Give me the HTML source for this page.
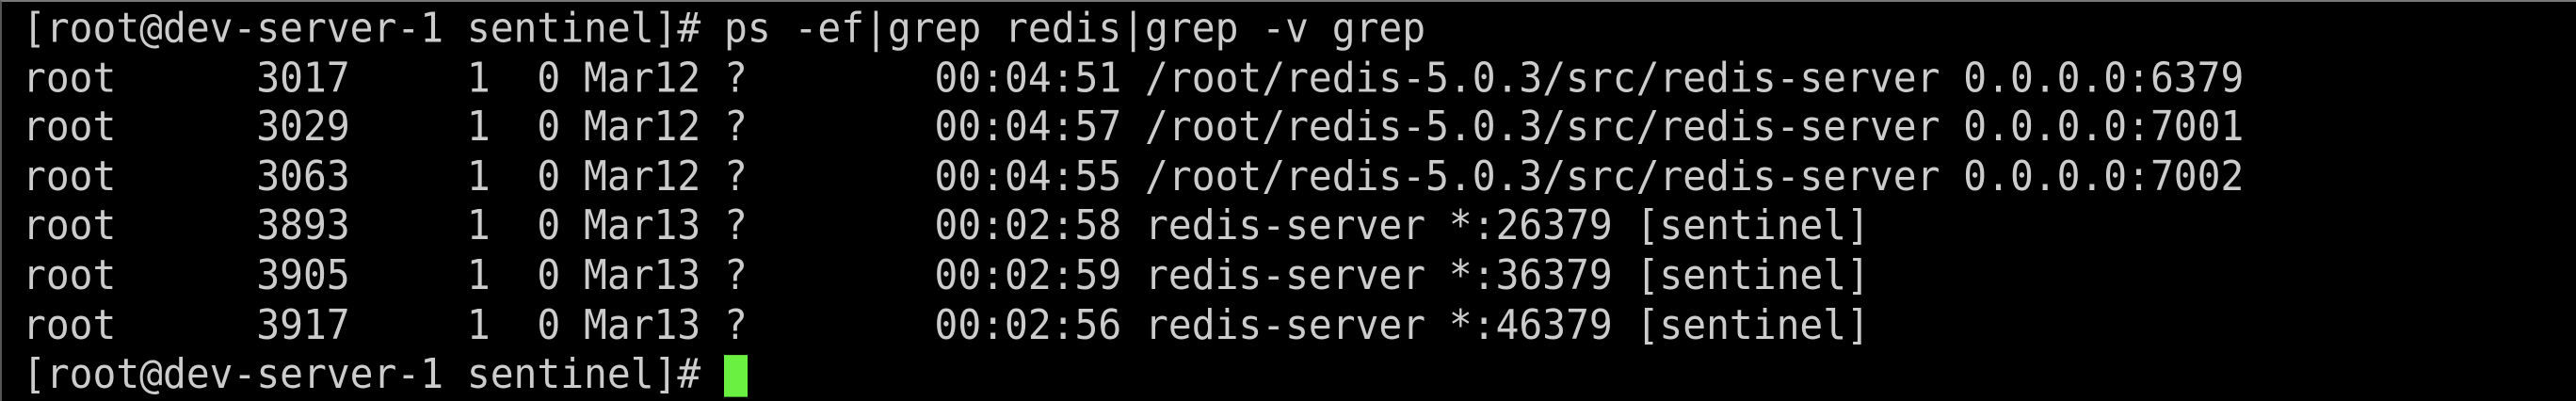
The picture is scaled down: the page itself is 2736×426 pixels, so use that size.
<!DOCTYPE html>
<html><head><meta charset="utf-8"><style>
html,body{margin:0;padding:0;background:#000;}
body{width:2736px;height:426px;overflow:hidden;position:relative;border-top:2px solid #777;border-left:2px solid #555;box-sizing:border-box;}
pre{margin:0;position:absolute;left:22px;top:2px;font-family:"DejaVu Sans Mono","Liberation Mono",monospace;font-size:41.25px;line-height:49.6px;color:#cccccc;transform:scaleY(1.06);transform-origin:0 0;}
.cur{display:inline-block;width:25px;height:42px;background:#6af040;vertical-align:-9px;}
</style></head><body>
<pre>[root@dev-server-1 sentinel]# ps -ef|grep redis|grep -v grep
root      3017     1  0 Mar12 ?        00:04:51 /root/redis-5.0.3/src/redis-server 0.0.0.0:6379
root      3029     1  0 Mar12 ?        00:04:57 /root/redis-5.0.3/src/redis-server 0.0.0.0:7001
root      3063     1  0 Mar12 ?        00:04:55 /root/redis-5.0.3/src/redis-server 0.0.0.0:7002
root      3893     1  0 Mar13 ?        00:02:58 redis-server *:26379 [sentinel]
root      3905     1  0 Mar13 ?        00:02:59 redis-server *:36379 [sentinel]
root      3917     1  0 Mar13 ?        00:02:56 redis-server *:46379 [sentinel]
[root@dev-server-1 sentinel]# <span class="cur"></span></pre>
</body></html>
